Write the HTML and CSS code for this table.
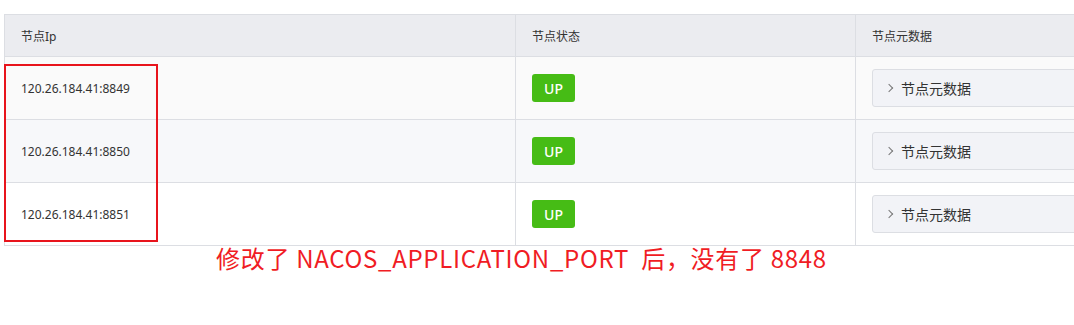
FILE: index.html
```html
<!DOCTYPE html>
<html lang="zh-CN">
<head>
<meta charset="utf-8">
<title>节点列表</title>
<link rel="stylesheet" href="styles.css">
</head>
<body>
<div class="page">
  <div class="table-wrap">
    <table class="node-table">
      <colgroup>
        <col class="c-ip">
        <col class="c-state">
        <col class="c-meta">
      </colgroup>
      <thead>
        <tr><th>节点Ip</th><th>节点状态</th><th>节点元数据</th></tr>
      </thead>
      <tbody>
        <tr class="r1">
          <td class="ip">120.26.184.41:8849</td>
          <td><span class="badge">UP</span></td>
          <td><div class="meta-btn"><span class="arrow"></span>节点元数据</div></td>
        </tr>
        <tr class="r2">
          <td class="ip">120.26.184.41:8850</td>
          <td><span class="badge">UP</span></td>
          <td><div class="meta-btn"><span class="arrow"></span>节点元数据</div></td>
        </tr>
        <tr class="r3">
          <td class="ip">120.26.184.41:8851</td>
          <td><span class="badge">UP</span></td>
          <td><div class="meta-btn"><span class="arrow"></span>节点元数据</div></td>
        </tr>
      </tbody>
    </table>
    <div class="red-box"></div>
  </div>
  <p class="note">修改了 NACOS_APPLICATION_PORT&nbsp; 后，没有了 8848</p>
</div>
</body>
</html>
```

FILE: styles.css
```css
html, body {
  margin: 0;
  padding: 0;
  background: #fff;
}
body {
  width: 1074px;
  height: 325px;
  overflow: hidden;
  font-family: "Noto Sans", "Noto Sans CJK SC", sans-serif;
  color: #333;
}
.page {
  padding: 14px 0 0 4px;
}
.table-wrap {
  position: relative;
  width: 1070px;
  overflow: hidden;
}
.node-table {
  border-collapse: collapse;
  table-layout: fixed;
  width: 1120px;
  font-size: 12px;
}
.c-ip { width: 511px; }
.c-state { width: 340px; }
.c-meta { width: 269px; }
.node-table th,
.node-table td {
  border: 1px solid #dcdee3;
  padding: 0 16px;
  text-align: left;
  vertical-align: middle;
}
.node-table th {
  height: 41px;
  background: #ebecf0;
  font-weight: normal;
  color: #333;
}
.node-table td {
  height: 62px;
}
.r1 td { background: #fafafa; }
.r2 td { background: #f7f8fa; }
.r3 td { background: #fff; }
.badge {
  display: inline-flex;
  align-items: center;
  justify-content: center;
  width: 43px;
  height: 28px;
  background: #46bc15;
  color: #fff;
  border-radius: 3px;
  font-size: 14px;
  font-weight: 500;
}
.meta-btn {
  display: flex;
  align-items: center;
  height: 36px;
  background: #f2f3f7;
  border: 1px solid #dcdee3;
  border-radius: 3px;
  font-size: 14px;
  color: #333;
  padding-left: 13px;
}
.arrow {
  width: 5px;
  height: 5px;
  border-right: 1px solid #777;
  border-top: 1px solid #777;
  transform: rotate(45deg);
  margin-right: 9px;
}
.red-box {
  position: absolute;
  left: 0;
  top: 50px;
  width: 150px;
  height: 174px;
  border: 2px solid #e8141c;
}
.note {
  margin: -2px 0 0;
  padding-left: 212px;
  font-size: 24px;
  line-height: 28px;
  letter-spacing: 0.7px;
  color: #f01c24;
  font-family: "Noto Sans CJK SC", sans-serif;
}
```
